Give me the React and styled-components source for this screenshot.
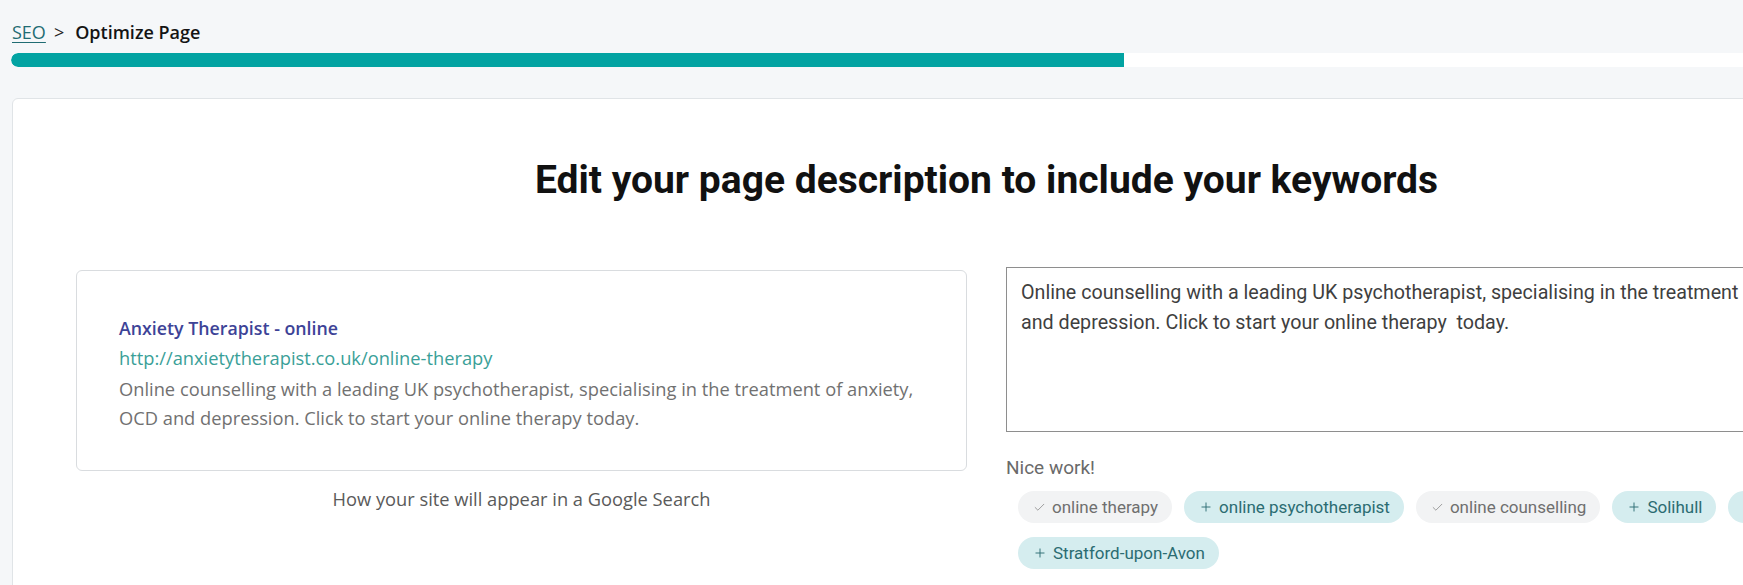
import React from "react";
import styled, { createGlobalStyle } from "styled-components";
import { Check, Plus } from "lucide-react";

const GlobalStyle = createGlobalStyle`
  html, body {
    margin: 0;
    padding: 0;
    overflow: hidden;
    background: #f5f7f9;
  }
  * { box-sizing: border-box; }
`;

const Page = styled.div`
  width: 1973px;
  padding: 20px 12px 0 12px;
  font-family: "Open Sans", "Liberation Sans", sans-serif;
`;

const Breadcrumb = styled.nav`
  display: flex;
  align-items: center;
  gap: 8px;
  font-size: 18px;
  line-height: 24px;
  color: #161616;
`;

const CrumbLink = styled.a`
  color: #1f6c73;
  text-decoration: underline;
  text-underline-offset: 3px;
  cursor: pointer;
`;

const CrumbSep = styled.span`
  color: #222;
  margin-right: 3px;
`;

const CrumbCurrent = styled.span`
  font-weight: 600;
  color: #141414;
`;

const ProgressTrack = styled.div`
  margin: 9px 0 0 -1px;
  height: 14px;
  border-radius: 7px;
  background: #ffffff;
  overflow: hidden;
`;

const ProgressFill = styled.div`
  height: 100%;
  background: #02a3a2;
  border-radius: 7px 0 0 7px;
`;

const Card = styled.section`
  margin-top: 31px;
  background: #ffffff;
  border: 1px solid #e0e4e7;
  border-radius: 6px;
  height: 560px;
  padding: 59px 63px 0 63px;
`;

const Heading = styled.h1`
  margin: 0;
  text-align: center;
  font-family: Roboto, "Liberation Sans", sans-serif;
  font-weight: 700;
  font-size: 39px;
  line-height: 44px;
  color: #111111;
`;

const Columns = styled.div`
  margin-top: 65px;
  display: grid;
  grid-template-columns: 891px 891px;
  column-gap: 39px;
  align-items: start;
`;

const PreviewColumn = styled.div`
  display: flex;
  flex-direction: column;
  align-items: stretch;
  padding-top: 3px;
`;

const SearchPreview = styled.div`
  border: 1px solid #d9dcdf;
  border-radius: 6px;
  padding: 43px 30px 38px 42px;
  font-size: 18.3px;
  line-height: 29px;
`;

const ResultTitle = styled.div`
  color: #3d4397;
  font-weight: 600;
  font-size: 17.8px;
`;

const ResultUrl = styled.div`
  color: #3a9f98;
`;

const ResultDesc = styled.div`
  margin-top: 2px;
  color: #717171;
  white-space: nowrap;
`;

const Caption = styled.div`
  margin-top: 16px;
  text-align: center;
  font-size: 18.3px;
  line-height: 24px;
  color: #5a5a5a;
`;

const EditColumn = styled.div`
  display: flex;
  flex-direction: column;
`;

const DescriptionInput = styled.textarea`
  display: block;
  width: 100%;
  height: 165px;
  margin: 0;
  padding: 10px 14px;
  border: 1px solid #8e8e8e;
  border-radius: 0;
  resize: none;
  outline: none;
  overflow: hidden;
  font-family: Roboto, "Liberation Sans", sans-serif;
  font-size: 19.7px;
  line-height: 30px;
  color: #3f3f3f;
  background: #fff;
`;

const Feedback = styled.div`
  margin-top: 24px;
  font-family: Roboto, "Liberation Sans", sans-serif;
  font-size: 19px;
  line-height: 24px;
  color: #6a6a6a;
`;

const ChipList = styled.div`
  margin-top: 11px;
  padding-left: 12px;
  display: flex;
  flex-wrap: wrap;
  gap: 14px 12px;
`;

const Chip = styled.span`
  display: inline-flex;
  align-items: center;
  gap: 6px;
  height: 32px;
  padding: 0 14px 0 15px;
  border-radius: 16px;
  font-family: Roboto, "Liberation Sans", sans-serif;
  font-size: 17px;
  white-space: nowrap;
  background: ${(p) => (p.$used ? "#f2f3f4" : "#d5edef")};
  color: ${(p) => (p.$used ? "#6f6f6f" : "#2b6c72")};
  svg {
    color: ${(p) => (p.$used ? "#8a8a8a" : "#2b6c72")};
    flex: none;
  }
`;

const keywords = [
  { label: "online therapy", used: true },
  { label: "online psychotherapist", used: false },
  { label: "online counselling", used: true },
  { label: "Solihull", used: false },
  { label: "Warwick", used: false },
  { label: "Stratford-upon-Avon", used: false },
];

const description =
  "Online counselling with a leading UK psychotherapist, specialising in the treatment of anxiety, OCD and depression. Click to start your online therapy  today.";

export default function App() {
  const progress = 0.571;
  return (
    <>
      <GlobalStyle />
      <Page>
        <Breadcrumb>
          <CrumbLink>SEO</CrumbLink>
          <CrumbSep>&gt;</CrumbSep>
          <CrumbCurrent>Optimize Page</CrumbCurrent>
        </Breadcrumb>
        <ProgressTrack>
          <ProgressFill style={{ width: `${progress * 100}%` }} />
        </ProgressTrack>
        <Card>
          <Heading>Edit your page description to include your keywords</Heading>
          <Columns>
            <PreviewColumn>
              <SearchPreview>
                <ResultTitle>Anxiety Therapist - online</ResultTitle>
                <ResultUrl>http://anxietytherapist.co.uk/online-therapy</ResultUrl>
                <ResultDesc>
                  Online counselling with a leading UK psychotherapist, specialising in the treatment of anxiety,
                  <br />
                  OCD and depression. Click to start your online therapy today.
                </ResultDesc>
              </SearchPreview>
              <Caption>How your site will appear in a Google Search</Caption>
            </PreviewColumn>
            <EditColumn>
              <DescriptionInput defaultValue={description} spellCheck={false} />
              <Feedback>Nice work!</Feedback>
              <ChipList>
                {keywords.map((k) => (
                  <Chip key={k.label} $used={k.used}>
                    {k.used ? (
                      <Check size={13} strokeWidth={1.5} />
                    ) : (
                      <Plus size={14} strokeWidth={1.6} />
                    )}
                    {k.label}
                  </Chip>
                ))}
              </ChipList>
            </EditColumn>
          </Columns>
        </Card>
      </Page>
    </>
  );
}
